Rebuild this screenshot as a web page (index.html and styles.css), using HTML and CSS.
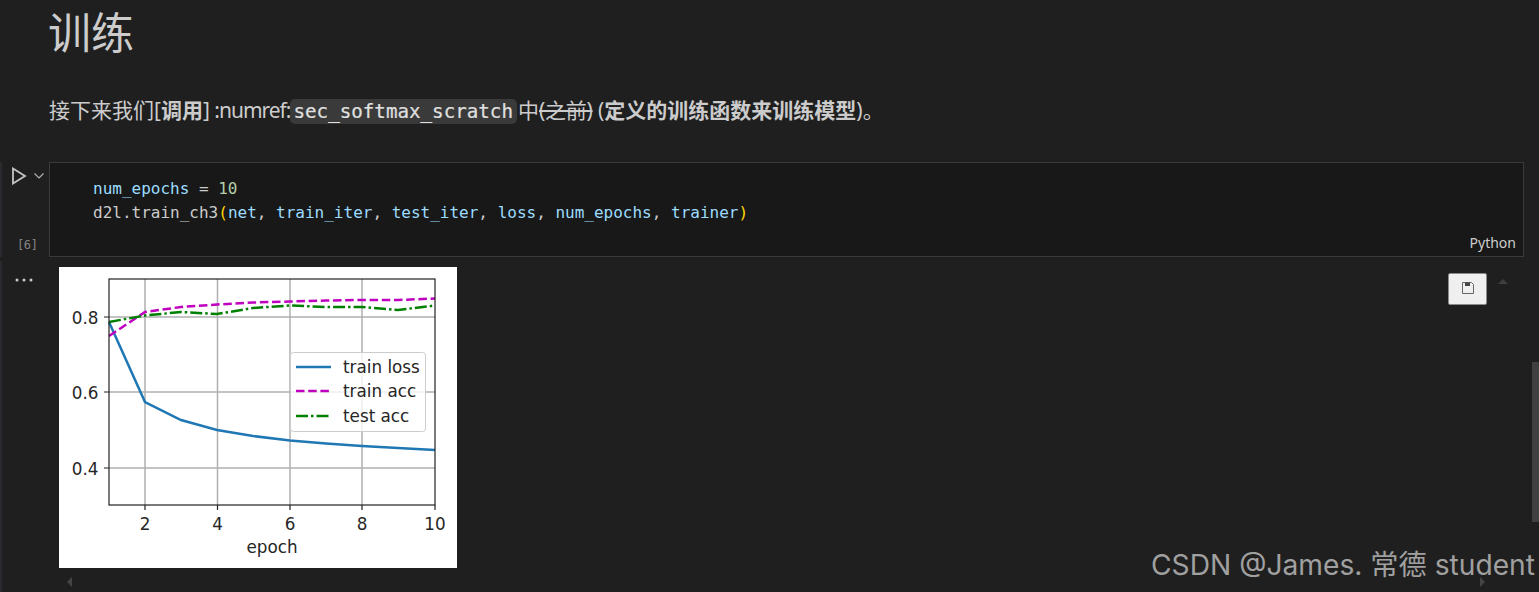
FILE: index.html
```html
<!DOCTYPE html>
<html lang="en">
<head>
  <meta charset="UTF-8">
  <title>训练</title>
  <link rel="stylesheet" href="styles.css">
</head>
<body>

<div class="notebook">

  <div class="markdown">
    <h1>训练</h1>
    <p>接下来我们[<b>调用</b>]<span class="latin"> :numref:</span><code>sec_softmax_scratch</code>中<s>(之前)</s> (<b>定义的训练函数来训练模型</b>)。</p>
  </div>

  <div class="cell">
    <div class="gutter">
      <div class="run">
        <svg width="16" height="18" viewBox="0 0 16 18"><path d="M2 1.500 L14 9 L2 16.500 Z" fill="none" stroke="#c5c5c5" stroke-width="1.800"/></svg>
        <svg width="12" height="8" viewBox="0 0 12 8"><path d="M1.500 1.500 L6 6 L10.500 1.500" fill="none" stroke="#b0b0b0" stroke-width="1.200"/></svg>
      </div>
      <div class="count">[6]</div>
    </div>
    <div class="editor">
      <pre><span class="var">num_epochs</span> = <span class="num">10</span>
<span class="plain">d2l</span>.<span class="plain">train_ch3</span><span class="paren">(</span><span class="var">net</span>, <span class="var">train_iter</span>, <span class="var">test_iter</span>, <span class="var">loss</span>, <span class="var">num_epochs</span>, <span class="var">trainer</span><span class="paren">)</span></pre>
      <div class="lang">Python</div>
    </div>
  </div>

  <div class="output">
    <div class="gutter">
      <div class="more">
        <svg width="18" height="4" viewBox="0 0 18 4"><circle cx="2" cy="2" r="1.500"/><circle cx="9" cy="2" r="1.500"/><circle cx="16" cy="2" r="1.500"/></svg>
      </div>
    </div>
    <div class="plot">
      <svg width="398" height="301" viewBox="0 0 398 301">
        <!-- grid -->
        <g stroke="#b0b0b0" stroke-width="1.500">
          <path d="M86 12V238M158.500 12V238M231 12V238M303 12V238"/>
          <path d="M50 50H376M50 125H376M50 201H376"/>
        </g>
        <!-- series -->
        <g fill="none" stroke-width="2.500">
          <polyline stroke="#1f77b4" points="50,55 86,135 122,153 158,163 194,169 231,173.500 267,176.500 303,179 339,181 376,183"/>
          <polyline stroke="#bf00bf" stroke-dasharray="8.500 3.700" points="50,69 86,45 122,40 158,37.500 194,35.500 231,34.500 267,33.500 303,33 339,33 376,31.500"/>
          <polyline stroke="#008000" stroke-dasharray="12 3 2.500 3" points="50,55 86,48.500 122,45 158,47 194,41 231,38.500 267,40 303,40 339,43 376,38.500"/>
        </g>
        <!-- frame and ticks -->
        <rect x="50" y="12" width="326" height="226" fill="none" stroke="#222" stroke-width="1.200"/>
        <g stroke="#222" stroke-width="1.200">
          <path d="M86 238v5M158.500 238v5M231 238v5M303 238v5M376 238v5"/>
          <path d="M50 50h-5M50 125h-5M50 201h-5"/>
        </g>
        <g class="tick" text-anchor="end">
          <text x="39.500" y="57">0.8</text>
          <text x="39.500" y="132">0.6</text>
          <text x="39.500" y="208">0.4</text>
        </g>
        <g class="tick" text-anchor="middle">
          <text x="86" y="263">2</text>
          <text x="158.500" y="263">4</text>
          <text x="231" y="263">6</text>
          <text x="303" y="263">8</text>
          <text x="376" y="263">10</text>
          <text x="213" y="286">epoch</text>
        </g>
        <!-- legend -->
        <rect x="231.500" y="85.500" width="135" height="79" rx="3" fill="#fff" fill-opacity="0.8" stroke="#ccc"/>
        <g fill="none" stroke-width="2.500">
          <path d="M237 100H272" stroke="#1f77b4"/>
          <path d="M237 124H272" stroke="#bf00bf" stroke-dasharray="8.500 3.700"/>
          <path d="M237 149H272" stroke="#008000" stroke-dasharray="12 3 2.500 3"/>
        </g>
        <g class="tick">
          <text x="284" y="106">train loss</text>
          <text x="284" y="130">train acc</text>
          <text x="284" y="155">test acc</text>
        </g>
      </svg>
    </div>
    <div class="save">
      <svg width="14" height="14" viewBox="0 0 14 14"><path d="M1.500 1.500H10.500L12.500 3.500V12.500H1.500Z" fill="none" stroke="#666" stroke-width="1"/><rect x="4" y="1.500" width="5" height="3.500" fill="#444"/></svg>
    </div>
    <div class="arrow-up"></div>
  </div>

  <div class="hscroll"><span class="arrow-left"></span><span class="arrow-right"></span></div>
  <div class="vscroll"></div>
  <div class="watermark">CSDN @James. 常德 student</div>
</div>

</body>
</html>
```

FILE: styles.css
```css
html, body {
  margin: 0;
  height: 100%;
  background-color: #1f1f1f;
  overflow: hidden;
}
.notebook {
  position: relative;
  height: 592px;
  overflow: hidden;
  font-family: "Noto Sans", "Noto Sans CJK SC", sans-serif;
  color: #cccccc;
}
.markdown {
  padding-left: 48px;
  height: 162px;
}
h1 {
  margin: 0;
  padding-top: 5px;
  font-size: 43px;
  line-height: 56px;
  font-weight: 400;
}
.markdown p {
  margin: 0;
  padding: 33px 0 0 1px;
  font-size: 21px;
  line-height: 32px;
}
.markdown s {
  letter-spacing: -0.25px;
}
.latin {
  letter-spacing: -1px;
}
.markdown code {
  font-family: "DejaVu Sans Mono", monospace;
  font-size: 19.200px;
  color: #e0e0e0;
  -webkit-text-stroke: 0.2px #e0e0e0;
  background-color: #3a3a3a;
  border-radius: 5px;
  padding: 1px 4px 1px 3px;
  margin-right: 1px;
}
.cell {
  display: flex;
  height: 95px;
  border-left: 2px solid #2b2b2f;
  margin-bottom: 4px;
}
.gutter {
  width: 47px;
  flex-shrink: 0;
  position: relative;
}
.run {
  display: flex;
  align-items: center;
  gap: 6px;
  padding: 5px 0 0 9px;
}
.count {
  position: absolute;
  bottom: 5px;
  left: 15px;
  font-family: "DejaVu Sans Mono", monospace;
  font-size: 12px;
  letter-spacing: -0.4px;
  color: #858585;
}
.editor {
  position: relative;
  width: 1475px;
  box-sizing: border-box;
  background-color: #181818;
  border: 1px solid #3a3a3a;
}
.editor pre {
  margin: 0;
  padding: 14px 0 0 43px;
  font-family: "DejaVu Sans Mono", monospace;
  font-size: 16px;
  line-height: 24px;
  color: #cccccc;
}
.var { color: #9cdcfe; }
.num { color: #b5cea8; }
.plain { color: #cccccc; }
.paren { color: #ffd700; }
.lang {
  position: absolute;
  right: 7px;
  bottom: 4px;
  font-size: 14px;
  line-height: 18px;
  color: #cccccc;
}
.output {
  position: relative;
  display: flex;
  height: 307px;
  padding-top: 6px;
  box-sizing: border-box;
  border-left: 2px solid #2b2b2f;
}
.output .gutter {
  width: 57px;
}
.more {
  padding: 11px 0 0 13px;
  fill: #cccccc;
}
.more svg { display: block; }
.plot {
  width: 398px;
  height: 301px;
  background-color: #ffffff;
}
.plot svg { display: block; }
.tick {
  font-family: "DejaVu Sans", sans-serif;
  font-size: 16.800px;
  fill: #262626;
}
.save {
  position: absolute;
  left: 1446px;
  top: 12px;
  width: 39px;
  height: 32px;
  box-sizing: border-box;
  padding-top: 4px;
  text-align: center;
  background-color: #efefef;
  border: 1px solid #8a8a8a;
  border-radius: 2px;
}
.arrow-up {
  position: absolute;
  left: 1496px;
  top: 18px;
  border: 5px solid transparent;
  border-top: 0;
  border-bottom: 5px solid #3f3f3f;
}
.hscroll {
  position: relative;
  height: 24px;
  border-left: 2px solid #2b2b2f;
}
.arrow-left, .arrow-right {
  position: absolute;
  top: 9px;
  border: 5px solid transparent;
}
.arrow-left {
  left: 65px;
  border-left: 0;
  border-right: 5px solid #444444;
}
.arrow-right {
  left: 1478px;
  border-right: 0;
  border-left: 5px solid #444444;
}
.vscroll {
  position: absolute;
  right: 0;
  top: 362px;
  width: 7px;
  height: 160px;
  background-color: #404040;
}
.watermark {
  position: absolute;
  right: 4px;
  top: 546px;
  font-family: Inter, "Noto Sans CJK SC", sans-serif;
  font-size: 28.200px;
  line-height: 38px;
  color: #a0a0a0;
  white-space: nowrap;
}
```
